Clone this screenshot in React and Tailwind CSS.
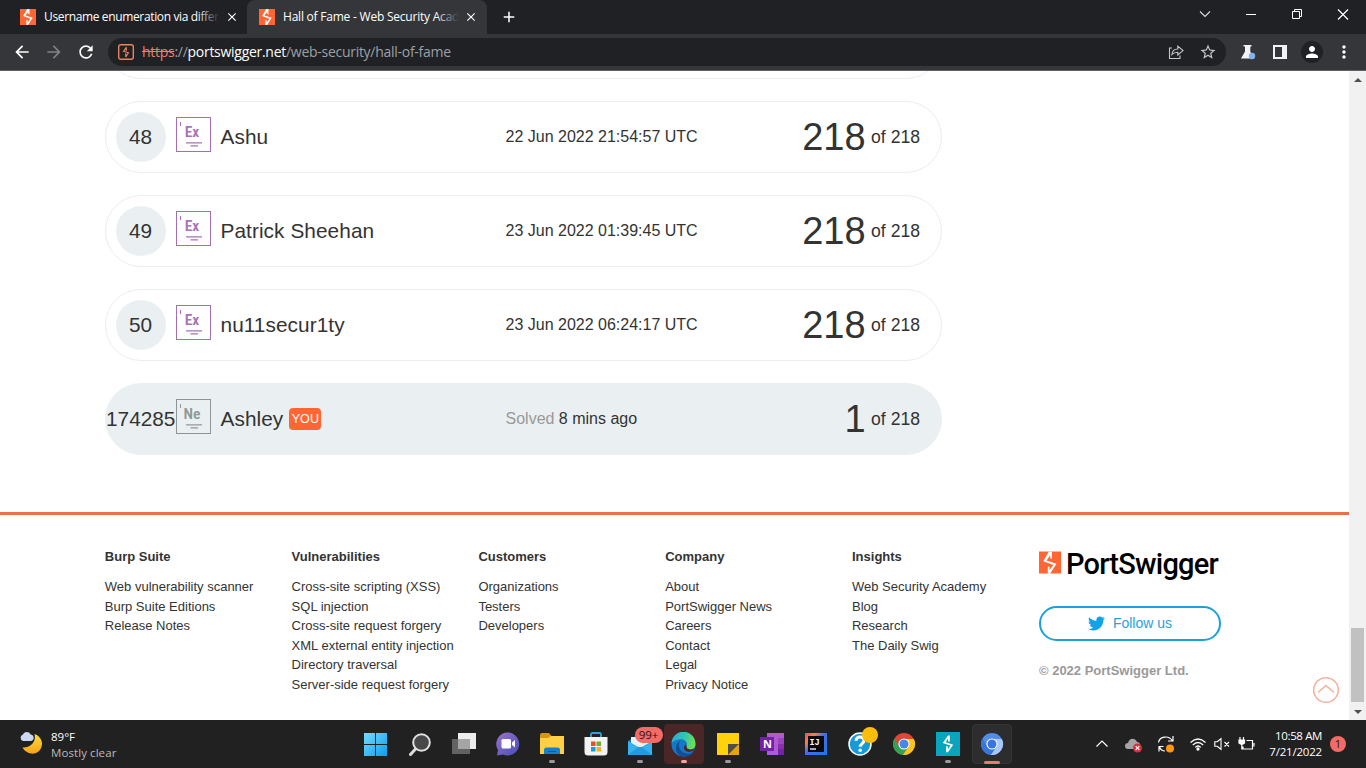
import React from "react";
import { MdArrowBack, MdArrowForward, MdRefresh, MdClose, MdAdd, MdStarBorder, MdMoreVert, MdPerson } from "react-icons/md";
import { FaTwitter } from "react-icons/fa";

const Bolt = ({ className }) => (
  <svg viewBox="0 0 22 22" className={className}>
    <path d="M0 0h22v22H0z" fill="#ff6633" />
    <path d="M9.800 0h3.200v7.400l-1.700-.6V3.800L7.500 8.900l10 3.300L11.200 22H8.800v-7.200l1.700.6v3l3.900-4.900L4.300 9.700z" fill="#fff" />
  </svg>
);

const Tab = ({ active, children }) => (
  <div className={active ? "flex h-[34px] w-[240px] items-center rounded-t-lg bg-[#35363a] pl-3" : "flex h-[34px] w-[239px] items-center pl-3"}>
    <Bolt className="h-4 w-4 shrink-0" />
    <div className={active ? "relative ml-2 w-[176px] shrink-0 whitespace-nowrap text-[12px] leading-[18px] tracking-[-0.22px] text-white" : "relative ml-2 w-[176px] shrink-0 whitespace-nowrap text-[12px] leading-[18px] tracking-[-0.36px] text-white"}>
      {children}
      <div className={active ? "absolute inset-y-0 right-0 w-6 bg-gradient-to-r from-transparent to-[#35363a]" : "absolute inset-y-0 right-0 w-6 bg-gradient-to-r from-transparent to-[#202124]"} />
    </div>
    <MdClose className="ml-[5px] h-[14px] w-[14px] shrink-0 text-white" />
  </div>
);

const Chrome = () => (
  <header className="shrink-0 font-['Open_Sans','Noto_Sans',sans-serif]">
    <div className="flex h-[34px] bg-[#202124] pl-2">
      <Tab>Username enumeration via differ</Tab>
      <Tab active>Hall of Fame - Web Security Acad</Tab>
      <MdAdd className="ml-[13px] mt-2 h-[18px] w-[18px] text-white" />
      <div className="ml-auto flex pr-[17px] text-white">
        <svg className="h-[28px] w-[14px]" viewBox="0 0 14 28" fill="none" stroke="#ddd" strokeWidth="1.100"><path d="M2 11.500l5 5 5-5" /></svg>
        <svg className="ml-[33px] h-[28px] w-[12px]" viewBox="0 0 12 28" stroke="#fff"><path d="M1 14.500h10" /></svg>
        <svg className="ml-[34px] h-[28px] w-[12px]" viewBox="0 0 12 28" fill="none" stroke="#fff"><path d="M1.500 11.500h7v7h-7zM3.500 11v-1.500h7v7h-1.500" /></svg>
        <svg className="ml-[34px] h-[28px] w-[12px]" viewBox="0 0 12 28" stroke="#fff" strokeWidth="1.200"><path d="M1 9.500l10 10M11 9.500l-10 10" /></svg>
      </div>
    </div>
    <div className="flex h-9 items-center bg-[#35363a] pl-3 text-white">
      <MdArrowBack className="h-[20px] w-[20px]" />
      <MdArrowForward className="ml-3 h-[20px] w-[20px] text-[#808286]" />
      <MdRefresh className="ml-3 h-[20px] w-[20px]" />
      <div className="ml-3 flex h-7 w-[1118px] items-center rounded-full bg-[#202124] pl-[10px] pr-[9px]">
        <svg className="h-4 w-4" viewBox="0 0 16 16" fill="none" stroke="#e8835f">
          <rect x="0.700" y="0.700" width="14.600" height="14.600" rx="2" strokeWidth="1.400" />
          <path d="M8.500 3.200L5.600 7.200l4.800 1.600-2.700 4.200M8.300 3.500v3.300M7.700 9.500V13" strokeWidth="1.200" />
        </svg>
        <div className="ml-2 whitespace-nowrap text-[14px] leading-[20px] tracking-[-0.280px] text-[#9aa0a6]">
          <span className="text-[#ee7f62] line-through">https</span>://<span className="text-white">portswigger.net</span>/web-security/hall-of-fame
        </div>
        <svg className="ml-auto h-[16px] w-[16px]" viewBox="0 0 16 16" fill="none" stroke="#c4c7c9" strokeWidth="1.100">
          <path d="M4 4H1.500v10.500h10.500v-3" /><path d="M4 10.500c.3-4 2.500-5.500 5.800-5.500V2.200L15 6.600 9.800 11V8.200C7.300 8.200 5.500 8.600 4 10.500z" />
        </svg>
        <MdStarBorder className="ml-[15px] h-[18px] w-[18px] text-[#c4c7c9]" />
      </div>
      <svg className="ml-[14px] h-4 w-4" viewBox="0 0 16 16"><path d="M3.500 1h8v1.500h-1.200v5L14 14.500H1L5 7.500v-5H3.500z" fill="#f1f3f4" /><circle cx="12" cy="12" r="3.200" fill="#7fb2f0" /></svg>
      <svg className="ml-[17px] h-[14px] w-[14px]" viewBox="0 0 14 14"><path d="M0 0h14v14H0zM2 2v10h7V2z" fill="#f1f3f4" fillRule="evenodd" /></svg>
      <div className="ml-[14px] flex h-[22px] w-[22px] items-center justify-center rounded-full bg-[#202124]"><MdPerson className="h-[18px] w-[18px]" /></div>
      <MdMoreVert className="ml-[11px] h-5 w-5" />
    </div>
    <div className="h-px bg-[#626064]" />
  </header>
);

const Badge = ({ label, dim }) => (
  <div className={dim ? "relative flex h-[35px] w-[35px] shrink-0 -translate-y-[3px] flex-col items-center border border-[#8b9595] text-[#8f9999]" : "relative flex h-[35px] w-[35px] shrink-0 -translate-y-[3px] flex-col items-center border border-[#a070b0] text-[#a672b8]"}>
    <span className="absolute left-[3px] top-[4px] h-[4px] w-px bg-current" />
    <span className="-ml-[3px] mt-[7px] font-['Roboto_Condensed',Roboto,sans-serif] text-[15.500px] font-semibold leading-[14px]">{label}</span>
    <svg className="mt-[3px] h-[5px] w-4" viewBox="0 0 16 5" fill="none" stroke="currentColor" strokeWidth="1.300"><path d="M0 .9h16M4.500 3.900h7.500" /></svg>
  </div>
);

const Row = ({ rank, name, date, score, you }) => (
  <div className={you ? "flex h-[72px] w-[837px] shrink-0 items-center rounded-full border border-[#eaf0f2] bg-[#eaf0f2] pr-[21px]" : "flex h-[72px] w-[837px] shrink-0 items-center rounded-full border border-[#ebeeee] bg-white pr-[21px]"}>
    <div className={you ? "w-[70px] text-[20.800px]" : "ml-[10px] mr-[10px] flex h-[50px] w-[50px] items-center justify-center rounded-full bg-[#eaf0f2] pr-px text-[20.800px]"}>{rank}</div>
    <Badge label={you ? "Ne" : "Ex"} dim={you} />
    <div className="ml-[9.500px] flex w-[285px] items-center text-[20.800px] tracking-[0.070px]">
      {name}
      {you && <span className="ml-[6px] flex h-[22px] w-8 items-center justify-center rounded bg-[#ff6633] pt-px text-[12.500px] text-white">YOU</span>}
    </div>
    <div className="text-[16px]">{you ? <><span className="text-[#999]">Solved</span> 8 mins ago</> : date}</div>
    <div className="ml-auto flex items-center text-[17.600px]"><span className="mr-[5.500px] text-[38px]">{score}</span>of 218</div>
  </div>
);

const columns = [
  ["Burp Suite", ["Web vulnerability scanner", "Burp Suite Editions", "Release Notes"]],
  ["Vulnerabilities", ["Cross-site scripting (XSS)", "SQL injection", "Cross-site request forgery", "XML external entity injection", "Directory traversal", "Server-side request forgery"]],
  ["Customers", ["Organizations", "Testers", "Developers"]],
  ["Company", ["About", "PortSwigger News", "Careers", "Contact", "Legal", "Privacy Notice"]],
  ["Insights", ["Web Security Academy", "Blog", "Research", "The Daily Swig"]],
];

const Page = () => (
  <main className="flex h-[649px] w-full shrink-0 overflow-hidden bg-white font-['Liberation_Sans',Arial,sans-serif] text-[#333332]">
    <div className="relative flex w-[1349px] shrink-0 flex-col">
      <div className="flex h-[441px] shrink-0 flex-col overflow-hidden pl-[105px]">
        <div className="-mt-[64px] flex flex-col gap-[22px]">
          <div className="h-[72px] w-[837px] shrink-0 rounded-full border border-[#ebeeee]" />
          <Row rank="48" name="Ashu" date="22 Jun 2022 21:54:57 UTC" score="218" />
          <Row rank="49" name="Patrick Sheehan" date="23 Jun 2022 01:39:45 UTC" score="218" />
          <Row rank="50" name="nu11secur1ty" date="23 Jun 2022 06:24:17 UTC" score="218" />
          <Row rank="174285" name="Ashley" score="1" you />
        </div>
      </div>
      <footer className="flex border-t-[3px] border-[#e8704a] pl-[104.800px] pt-[32px] text-[13px] leading-[19.500px]">
        {columns.map(([title, links]) => (
          <div key={title} className="w-[186.800px] shrink-0 whitespace-nowrap">
            <div className="mb-[10.500px] font-bold">{title}</div>
            {links.map((l) => <div key={l}>{l}</div>)}
          </div>
        ))}
        <div className="ml-[0.200px] flex flex-col pt-px">
          <div className="flex h-[32px] items-start">
            <Bolt className="mt-[3px] h-[23px] w-[22px]" />
            <span className="-mt-px ml-[5px] font-[Roboto,sans-serif] text-[29px] font-medium leading-[34px] tracking-[-0.780px] text-black">PortSwigger</span>
          </div>
          <div className="mt-[26px] flex h-[35px] w-[182px] items-center justify-center rounded-full border-2 border-[#1da1dc] text-[14px] text-[#2a9fe0]">
            <FaTwitter className="mr-[8px] h-[17px] w-[17px] text-[#0fa4ea]" />Follow us
          </div>
          <div className="mt-[20px] font-bold text-[#999]">© 2022 PortSwigger Ltd.</div>
        </div>
      </footer>
      <svg className="absolute bottom-[16px] right-[9px] h-[28px] w-[28px]" viewBox="0 0 28 28" fill="none" stroke="#f4b09c" strokeWidth="1.500"><circle cx="14" cy="14" r="12.300" /><path d="M6 16.500l8-7 8 7" /></svg>
    </div>
    <div className="flex w-[17px] flex-col items-center bg-[#f1f1f1]">
      <svg className="mt-[6px] h-[6px] w-[8px]" viewBox="0 0 8 6"><path d="M0 5l4-4 4 4z" fill="#505050" /></svg>
      <div className="mt-auto h-[74px] w-[13px] bg-[#c1c1c1]" />
      <svg className="mb-[5px] mt-[7px] h-[6px] w-[8px]" viewBox="0 0 8 6"><path d="M0 1l4 4 4-4z" fill="#505050" /></svg>
    </div>
  </main>
);

const Slot = ({ children, active, mark, red }) => (
  <div className="flex h-12 w-11 items-center justify-center">
    <div className={active === "red" ? "relative flex h-10 w-10 items-center justify-center rounded bg-[#4a2627]" : active ? "relative flex h-10 w-10 items-center justify-center rounded border border-[#343434] bg-[#2d2d2d]" : "relative flex h-10 w-10 items-center justify-center"}>
      {children}
      {mark && <span className={mark === "wide" ? "absolute -bottom-px h-[3px] w-4 rounded-full bg-[#ef7770]" : red ? "absolute bottom-px h-[3px] w-[6px] rounded-full bg-[#f5a3a0]" : "absolute bottom-px h-[3px] w-[6px] rounded-full bg-[#9a9a9a]"} />}
    </div>
  </div>
);

const ChromeIcon = ({ a, b, c, d }) => (
  <svg className="h-6 w-6" viewBox="0 0 24 24">
    <circle cx="12" cy="12" r="11" fill={a} />
    <path d="M2.500 6.500A11 11 0 0 0 10.800 22.950L16.800 14.800 12 12 7.200 14.700z" fill={b} />
    <path d="M21.800 7A11 11 0 0 1 10.800 22.950L16.700 14.800 12 7z" fill={c} />
    <circle cx="12" cy="12" r="5.600" fill="#fff" /><circle cx="12" cy="12" r="4.500" fill={d} />
  </svg>
);

const Taskbar = () => (
  <div className="flex h-12 shrink-0 bg-[#212122] font-['Open_Sans','Noto_Sans',sans-serif] text-[11.500px] leading-4 text-white">
    <div className="flex w-[353.500px] shrink-0 pl-[19px] pt-[8px]">
      <svg className="mt-[2px] h-[25px] w-[25px]" viewBox="0 0 25 25">
        <defs><linearGradient id="moon" x1="0" x2="0" y1="0" y2="1"><stop stopColor="#ffdc3a" /><stop offset="1" stopColor="#f5a318" /></linearGradient></defs>
        <path d="M15.500 4c2 8-4 14-12 13.500C8 25.500 19 26 22.300 17.500 24.500 12 21.500 6 15.500 4z" fill="url(#moon)" />
        <path d="M4 11a3.400 3.400 0 0 1 0-6.500C5 1.500 10 1 11.500 4.500c4 0 4.500 6.500 0 6.500z" fill="#cbd9f2" />
      </svg>
      <div className="ml-[7px] pt-px"><div>89°F</div><div className="tracking-[0.080px] text-[#bababa]">Mostly clear</div></div>
    </div>
    <div className="flex">
      <Slot><svg className="h-[23px] w-[23px]" viewBox="0 0 23 23"><defs><linearGradient id="win" x2="1" y2="1"><stop stopColor="#73dcff" /><stop offset="1" stopColor="#109bea" /></linearGradient></defs><path d="M0 0h11v11H0zM12 0h11v11H12zM0 12h11v11H0zM12 12h11v11H12z" fill="url(#win)" /></svg></Slot>
      <Slot><svg className="h-6 w-6" viewBox="0 0 24 24" stroke="#dfdfdf"><circle cx="13.500" cy="10.500" r="8.300" fill="#48484a" strokeWidth="2" /><path d="M7.500 17l-5 5.500" strokeWidth="3" strokeLinecap="round" /></svg></Slot>
      <Slot><svg className="h-6 w-6" viewBox="0 0 24 24"><path d="M6 1h18v16H6z" fill="#ececec" /><path d="M0 7h18v15H0z" fill="#626262" /><path d="M6 7h12v10H6z" fill="#a5a5a5" /></svg></Slot>
      <Slot><svg className="h-6 w-6" viewBox="0 0 24 24"><defs><linearGradient id="chat" x2="1" y2="1"><stop stopColor="#9c72cb" /><stop offset="1" stopColor="#454fba" /></linearGradient></defs><path d="M12 .5a11.500 11.500 0 1 1-5 22L1 23.500 2 18A11.500 11.500 0 0 1 12 .5z" fill="url(#chat)" /><rect x="5.500" y="7" width="9.500" height="9.500" rx="1.500" fill="#fff" /><path d="M16 10.500l3-2.500v7.500l-3-2.500z" fill="#fff" /></svg></Slot>
      <Slot mark><svg className="h-6 w-6" viewBox="0 0 24 24"><path d="M0 3q0-2 2-2h7l2.500 3H24v18H0z" fill="#d79514" /><path d="M0 6h8l3-2h13v18H0z" fill="#ffcf45" /><path d="M4 22v-4q0-2.500 2.500-2.500h11Q20 15.500 20 18v4z" fill="#1380d1" /><path d="M8 19.500h8" stroke="#0b559d" /></svg></Slot>
      <Slot><svg className="h-6 w-6" viewBox="0 0 24 24"><path d="M7 7V2.500q0-1.500 1.500-1.500h7Q17 1 17 2.500V7" fill="none" stroke="#28a5de" strokeWidth="1.800" /><path d="M.5 5h23v15q0 3.500-3.500 3.500H4Q.5 23.500.5 20z" fill="#f3f3f3" /><path d="M7 9.500h4.500V14H7z" fill="#e84d27" /><path d="M12.500 9.500H17V14h-4.500z" fill="#72ae20" /><path d="M7 15h4.500v4.500H7z" fill="#149cdc" /><path d="M12.500 15H17v4.500h-4.500z" fill="#f2b415" /></svg></Slot>
      <Slot mark>
        <svg className="h-6 w-6" viewBox="0 0 24 24"><path d="M0 9L12 1l12 8v14H0z" fill="#1577c6" /><path d="M3 5h18v10H3z" fill="#e7f2fb" /><path d="M0 9l12 7 12-7v14H0z" fill="#38b1ef" /><path d="M0 23l10-8 4 0 10 8z" fill="#2699df" /></svg>
        <span className="absolute left-[15px] top-[3px] flex h-4 w-[28px] items-center justify-center rounded-full bg-[#f36b66] text-[11.500px] text-[#271313]">99+</span>
      </Slot>
      <Slot active="red" mark red><svg className="h-[25px] w-[25px]" viewBox="0 0 24 24"><defs><linearGradient id="edge" x2="1" y2=".3"><stop stopColor="#25a8df" /><stop offset=".6" stopColor="#36c6ae" /><stop offset="1" stopColor="#69dd56" /></linearGradient></defs><circle cx="12" cy="12" r="11.500" fill="#1478c9" /><path d="M.5 11A11.500 11.500 0 0 1 23.500 11.500c0 4-3 5.500-6 5.500-2.500 0-4-1-3-2.500C17 10 13 6.500 8.500 7 4.500 7.300 1.500 9 .5 11z" fill="url(#edge)" /><path d="M9 8.500c-3 4-1 10 5 12 3 1 6 .3 8-2.200-2 5-8.500 6.700-13 4.400C3 20 3.500 12 9 8.500z" fill="#124e94" /><path d="M15 12.500c-.6 2.500.8 4.200 3.500 4.200 1.500 0 2.800-.4 4-1.200l-1 2.500c-5 2.500-9.500.5-9-3.500.2-1.300 1-2 2.500-2z" fill="#4b2627" /></svg></Slot>
      <Slot mark><svg className="h-[22px] w-[22px]" viewBox="0 0 22 22"><path d="M0 0h22v11L11 22H0z" fill="#ffd20b" /><path d="M11 11h11L11 22z" fill="#514e48" /><path d="M22 11v11H11z" fill="#e4a805" /></svg></Slot>
      <Slot><svg className="h-6 w-6" viewBox="0 0 24 24"><path d="M7 1h17v22H7z" fill="#ae5bd3" /><path d="M18 6h6v6h-6z" fill="#9b45bf" /><path d="M18 12h6v5h-6z" fill="#8a30ae" /><path d="M18 17h6v6h-6z" fill="#7723a1" /><path d="M0 5h14v14H0z" fill="#7420a7" /><text x="3" y="16" fill="#fff" fontSize="11" fontWeight="700">N</text></svg></Slot>
      <Slot><svg className="h-[22px] w-[22px]" viewBox="0 0 22 22"><defs><linearGradient id="ij" x2="1" y2="1"><stop stopColor="#f54375" /><stop offset=".25" stopColor="#f28349" /><stop offset=".45" stopColor="#426fe9" /><stop offset="1" stopColor="#1e77df" /></linearGradient></defs><path d="M0 0h22v22H0z" fill="url(#ij)" /><path d="M3 3h16v16H3z" fill="#0b0711" /><text x="4.500" y="11.500" fill="#fff" fontSize="8.500" fontWeight="700" fontFamily="Liberation Mono">IJ</text><path d="M5 16h6" stroke="#fff" strokeWidth="1.300" /></svg></Slot>
      <Slot><svg className="h-6 w-6" viewBox="0 0 24 24"><circle cx="12" cy="12" r="11" fill="#179bd7" stroke="#fff" strokeWidth="1.500" /><path d="M8 8.800C8 3.800 16 3.800 16 8.600c0 3-3.800 3-3.800 6.200" fill="none" stroke="#fff" strokeWidth="3" /><circle cx="12.200" cy="18.300" r="1.800" fill="#fff" /></svg><span className="absolute left-[22px] top-[3px] h-4 w-4 rounded-full bg-[#ffbd0a]" /></Slot>
      <Slot><ChromeIcon a="#e04537" b="#30a451" c="#fbc61b" d="#4488ef" /></Slot>
      <Slot mark><svg className="h-6 w-6" viewBox="0 0 24 24"><path d="M0 0h24v24H0z" fill="#08a5bd" /><path d="M12.900 3.500v6.100M12.600 4.200L8.200 10.600l7.600 2.600-4.600 6.600M11 14.200v6" fill="none" stroke="#fff" strokeWidth="1.800" /></svg></Slot>
      <Slot active mark="wide"><ChromeIcon a="#518de9" b="#3675dc" c="#a8c8f9" d="#3776df" /></Slot>
    </div>
    <div className="ml-auto flex items-center pr-5">
      <svg className="h-4 w-[14px]" viewBox="0 0 14 16" fill="none" stroke="#fff" strokeWidth="1.200"><path d="M1.500 10.500L7 5l5.500 5.500" /></svg>
      <svg className="ml-[16px] h-[17px] w-[18px]" viewBox="0 0 18 17"><path d="M3 13a3 3 0 0 1 0-6C4 2 10 1 12 6c4 0 5 7 0 7z" fill="#a4a4a4" /><circle cx="12.500" cy="12" r="4.500" fill="#d8303b" /><path d="M10.700 10.200l3.600 3.600m0-3.600l-3.600 3.600" stroke="#fff" strokeWidth="1.200" /></svg>
      <svg className="ml-[14px] h-[18px] w-[18px]" viewBox="0 0 18 18" fill="none" stroke="#fff" strokeWidth="1.200"><path d="M1.500 7.500C2.500 1 12 0 15.500 6M16 1v5h-5M8 16c-2.500 0-4.500-1.500-5.500-4M2 16.500v-5h4.500" /><circle cx="13" cy="13.500" r="4" fill="#ff980e" stroke="none" /></svg>
      <svg className="ml-[15px] h-4 w-4" viewBox="0 0 16 16" fill="none" stroke="#fff" strokeWidth="1.300"><path d="M.5 6.500q7.500-7 15 0M2.800 9q5.200-5 10.400 0M5.200 11.400q2.800-2.800 5.600 0" /><circle cx="8" cy="13" r="1" fill="#fff" /></svg>
      <svg className="ml-[8px] h-4 w-4" viewBox="0 0 16 16" fill="none" stroke="#fff" strokeWidth="1.100"><path d="M.8 5.800h2.400L7 2.700v10.600l-3.800-3H.8zM10.500 6l4.500 4.500m0-4.500l-4.500 4.500" /></svg>
      <svg className="ml-[8px] h-4 w-[17px]" viewBox="0 0 17 16" fill="none" stroke="#fff" strokeWidth="1.200"><path d="M8.500 4.500h6v8.500H5v-2.500M16 7v3.500M2 1v3M5.500 1v3M3.800 8.500v5" /><path d="M1 4h5.500v3q-2.700 2.500-5.500 0z" fill="#fff" /></svg>
      <div className="ml-[12px] w-[55px] whitespace-nowrap text-right tracking-[-0.380px]"><div>10:58 AM</div><div className="tracking-[-0.200px]">7/21/2022</div></div>
      <div className="ml-[8px] flex h-4 w-4 items-center justify-center rounded-full bg-[#f36b66] text-[11px] text-[#271313]">1</div>
    </div>
  </div>
);

export default function App() {
  return (
    <div className="flex h-[768px] w-[1366px] flex-col overflow-hidden">
      <Chrome />
      <Page />
      <Taskbar />
    </div>
  );
}
